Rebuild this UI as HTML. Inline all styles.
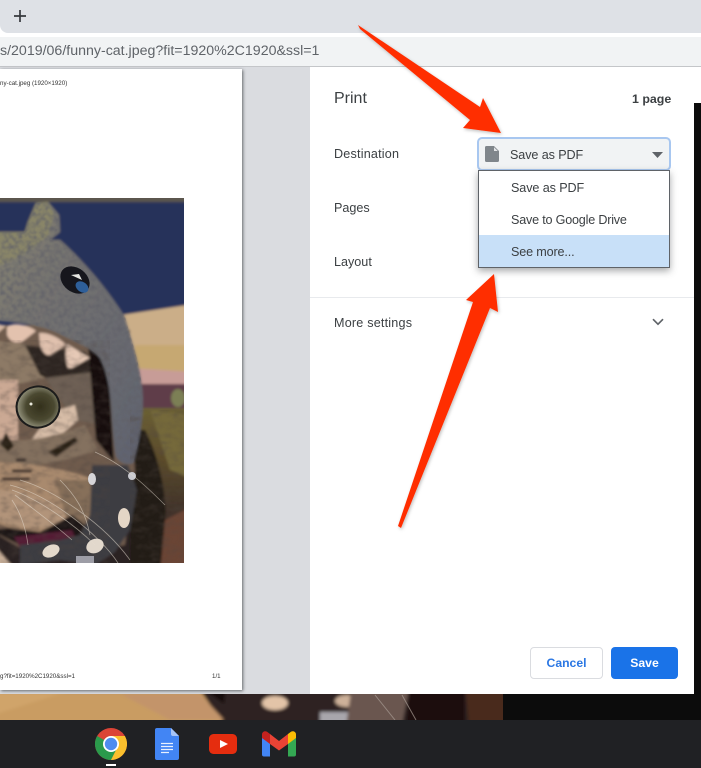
<!DOCTYPE html>
<html><head><meta charset="utf-8"><title>Print</title>
<style>
html,body{margin:0;padding:0;width:701px;height:768px;overflow:hidden;background:#0c0c0c;font-family:"Liberation Sans",sans-serif}
.a{position:absolute;white-space:nowrap}
svg{position:absolute;display:block}
.t{font-size:12.6px;color:#3c4043;line-height:16px}
</style></head><body>
<div class="a" style="left:0;top:0;width:701px;height:37px;background:#fff"></div>
<div class="a" style="left:0;top:0;width:701px;height:33px;background:#dee1e6;border-bottom-left-radius:8px"></div>
<svg style="left:13px;top:9px" width="14" height="14" viewBox="0 0 14 14"><path d="M7 1v12M1 7h12" stroke="#35383c" stroke-width="1.7" fill="none"/></svg>
<div class="a" style="left:0;top:37px;width:701px;height:29px;background:#f1f3f4"></div>
<div class="a" style="left:0;top:66px;width:701px;height:1px;background:#c4c6c9"></div>
<div class="a" style="left:0;top:43px;font-size:14.2px;line-height:16px;color:#5f6368">s/2019/06/funny-cat.jpeg?fit=1920%2C1920&amp;ssl=1</div>

<!-- right side background -->
<div class="a" style="left:694px;top:67px;width:7px;height:36px;background:#fff"></div>
<!-- photo strip at bottom -->
<svg style="left:0;top:694px" width="503" height="26" viewBox="0 0 503 26">
<defs><filter id="bl" filterUnits="userSpaceOnUse" x="-20" y="-20" width="560" height="70"><feGaussianBlur stdDeviation="1.5"/></filter></defs>
<rect width="503" height="26" fill="#3a2a26"/>
<g filter="url(#bl)">
<rect x="-10" y="-10" width="530" height="50" fill="#2e2220"/>
<path d="M-10-10H196L230 40H-10Z" fill="#c99c62"/>
<path d="M-10 -10H90L-10 22Z" fill="#d0a46a"/>
<path d="M120 0H200L224 26H170Z" fill="#c3946a"/>
<path d="M198-10H226L224 10Z" fill="#140e0c"/>
<ellipse cx="275" cy="9" rx="13" ry="7" fill="#e3c4a8"/>
<ellipse cx="347" cy="7" rx="12" ry="6" fill="#cdb199"/>
<rect x="320" y="18" width="30" height="14" fill="#a8a6ac"/>
<path d="M352-10H410L400 40H345Z" fill="#6b5650"/>
<path d="M410-10H465V40H405Z" fill="#1e110e"/>
<path d="M465-10H520V40H470Z" fill="#4a2a1e"/>
</g>
<path d="M375 1l20 25M402 1l14 25" stroke="#a89c94" stroke-width="1" opacity=".7"/>
</svg>

<!-- preview area -->
<div class="a" style="left:0;top:67px;width:310px;height:627px;background:#dadce0"></div>
<div class="a" style="left:0;top:69px;width:242px;height:621px;background:#fff;box-shadow:1px 1px 3px rgba(60,64,67,.75)"></div>
<div class="a" style="left:0;top:79px;font-size:6.2px;line-height:8px;color:#333;margin-top:1px">ny-cat.jpeg (1920×1920)</div>
<div class="a" style="left:0;top:673px;font-size:6.2px;line-height:8px;color:#333">g?fit=1920%2C1920&amp;ssl=1</div>
<div class="a" style="left:212px;top:673px;font-size:6.2px;line-height:8px;color:#333">1/1</div>

<!-- cat photo -->
<svg style="left:0;top:198px" width="184" height="365" viewBox="0 198 184 365">
<defs>
<filter id="s" filterUnits="userSpaceOnUse" x="-30" y="170" width="250" height="420"><feGaussianBlur stdDeviation="1.3"/></filter>
<filter id="w" filterUnits="userSpaceOnUse" x="-30" y="170" width="250" height="420"><feGaussianBlur stdDeviation=".35"/></filter>
<filter id="noise" filterUnits="userSpaceOnUse" x="0" y="198" width="184" height="365"><feTurbulence type="fractalNoise" baseFrequency=".22" numOctaves="2" seed="7"/><feColorMatrix values="0 0 0 0 .12 0 0 0 0 .12 0 0 0 0 .14 1.9 0 0 0 -.7"/><feGaussianBlur stdDeviation=".8"/></filter>
<filter id="noise2" filterUnits="userSpaceOnUse" x="0" y="198" width="184" height="365"><feTurbulence type="fractalNoise" baseFrequency=".1 .18" numOctaves="3" seed="3"/><feColorMatrix values="0 0 0 0 .08 0 0 0 0 .06 0 0 0 0 .05 1.6 0 0 0 -.66"/><feGaussianBlur stdDeviation=".9"/></filter>
<radialGradient id="iris" cx=".55" cy=".5" r=".6"><stop offset="0" stop-color="#33301c"/><stop offset=".55" stop-color="#4a4830"/><stop offset=".85" stop-color="#8b8a74"/><stop offset="1" stop-color="#33322e"/></radialGradient>
<linearGradient id="fur" x1="0" y1="0" x2="0" y2="1"><stop offset="0" stop-color="#6b6034"/><stop offset=".3" stop-color="#5c4c2c"/><stop offset=".6" stop-color="#42342a"/><stop offset="1" stop-color="#3d2a22"/></linearGradient>
<linearGradient id="hatg" x1="0" y1="0" x2="1" y2="1"><stop offset="0" stop-color="#8a8672"/><stop offset=".35" stop-color="#757370"/><stop offset="1" stop-color="#5e626f"/></linearGradient>
<clipPath id="hatc"><path d="M0 232L25 232L28 222L36 203L48 202L59 215L60 232L50 240L60 240C85 262 108 290 125 317C133 345 140 365 142 387C145 410 140 440 133 463C128 465 120 464 116 456C110 420 114 385 100 358C92 347 70 340 60 334C40 324 15 322 0 320Z"/></clipPath>
<clipPath id="furc"><path d="M0 340H110V563H0ZM130 410H184V563H130Z"/></clipPath>
</defs>
<rect x="0" y="198" width="184" height="365" fill="#26305a"/>
<g filter="url(#s)">
<rect x="-10" y="190" width="200" height="130" fill="#26305a"/>
<rect x="-10" y="188" width="200" height="14" fill="#5c564e"/>
<path d="M115 316L194 304V375H125Z" fill="#cbae88"/>
<path d="M135 345L194 345V375H135Z" fill="#c6a872"/>
<path d="M130 368L194 372V390L135 386Z" fill="#c79c97"/>
<path d="M135 384H194V414H140Z" fill="#5f3c48"/>
<ellipse cx="178" cy="398" rx="7" ry="9" fill="#7b7f55"/>
<rect x="125" y="408" width="69" height="165" fill="url(#fur)"/>
<path d="M145 430C165 470 172 520 160 573H125L125 430Z" fill="#221a16"/>
<path d="M150 410L194 415V480L170 470Z" fill="#75693a"/>
<path d="M165 520L194 505V573H160Z" fill="#6b4436"/>
<rect x="-10" y="330" width="140" height="245" fill="#2a2024"/>
<!-- face base -->
<path d="M-10 325H125L135 470L125 545L40 560L-10 530Z" fill="#6f5c4d"/>
<path d="M-10 340L30 345L45 378L18 384L-10 380Z" fill="#8d7a66"/>
<path d="M25 345L85 352L105 380L60 385L40 375Z" fill="#2f2620"/>
<path d="M45 378L92 372L102 425L75 420Z" fill="#6e6054"/>
<path d="M-10 380H18V440H-10Z" fill="#cba994"/>
<path d="M52 412L75 405L78 420L55 440L30 442Z" fill="#d8bea8"/>
<path d="M88 345L108 362L114 462L96 440Z" fill="#14100e"/>
<path d="M-10 438C25 445 60 435 85 425L98 450C70 460 30 470 -10 465Z" fill="#84715f"/>
<path d="M-10 462C30 462 70 470 95 480L85 530C60 540 25 535 -10 520Z" fill="#a98a6e"/>
<path d="M-10 490C25 490 55 500 72 520C50 530 15 532 -10 515Z" fill="#b2947a"/>
<path d="M55 480L95 480L88 525L70 530Z" fill="#87705a"/>
<path d="M6 432l8 14-6 6-8-8zM48 452l27-15 3 4-22 16z" fill="#2a2019"/>
<path d="M12 471h20M2 479h28M16 460h10" stroke="#2a2420" stroke-width="3"/>
<path d="M-10 530L20 545H75L85 525L72 515L40 532L10 528Z" fill="#1a1215"/>
<path d="M14 537L72 530L76 540L20 548Z" fill="#551a36"/>
<path d="M-10 540L18 573H-10Z" fill="#c9b09a"/>
<!-- hat -->
<path d="M-10 232L25 232L28 222L36 203L48 202L59 215L60 232L50 240L60 240C85 262 108 290 125 317C133 345 140 365 142 387C145 410 140 440 133 463C128 465 120 464 116 456C110 420 114 385 100 358C92 347 70 340 60 334C40 324 15 322 -10 320Z" fill="url(#hatg)"/>
<path d="M-10 232H25L28 222L36 203L48 202L54 214L48 236C35 245 20 260 -10 268Z" fill="#8a8668"/>
<path d="M92 465L128 465L137 490L130 530L115 552L95 565L60 560L20 565L20 545L60 540L80 535L90 515Z" fill="#3d3c42"/>
<!-- teeth -->
<path d="M7 327C14 321 30 326 36 331L22 342C16 344 10 342 7 335Z" fill="#e3c2ae"/>
<path d="M39 333C48 332 60 338 66 345L52 354C47 358 42 352 40 345Z" fill="#e0c1ae"/>
<path d="M67 344L90 358L72 368L68 368C65 360 65 350 67 344Z" fill="#e6c9b6"/>
<path d="M-10 322L6 326L-10 340Z" fill="#d6b8a2"/>
</g>
<!-- knit texture -->
<g clip-path="url(#hatc)"><rect x="0" y="198" width="184" height="365" filter="url(#noise)"/></g>
<g clip-path="url(#furc)"><rect x="0" y="340" width="184" height="223" filter="url(#noise2)" opacity=".5"/></g>
<g filter="url(#w)">
<!-- button eye -->
<ellipse cx="75" cy="280" rx="16" ry="12" transform="rotate(38 75 280)" fill="#14171f"/>
<ellipse cx="82" cy="287" rx="7" ry="5" transform="rotate(35 82 287)" fill="#2f5f99"/>
<path d="M71 275l8-1 3 6z" fill="#e6e6e2"/>
<!-- bobbles -->
<ellipse cx="124" cy="518" rx="6" ry="10" fill="#e4d6c6"/>
<ellipse cx="51" cy="551" rx="9" ry="6" transform="rotate(-25 51 551)" fill="#e4d9cb"/>
<ellipse cx="95" cy="546" rx="9" ry="7" transform="rotate(-25 95 546)" fill="#e2d8cc"/>
<ellipse cx="92" cy="479" rx="4" ry="6" fill="#d6d5d8"/>
<ellipse cx="132" cy="476" rx="4" ry="4" fill="#c9c9cf"/>
<rect x="76" y="556" width="18" height="8" fill="#9d9da6"/>
<!-- eye -->
<ellipse cx="38" cy="407" rx="21.500" ry="20.500" transform="rotate(-10 38 407)" fill="url(#iris)" stroke="#1e1c1a" stroke-width="2"/>
<circle cx="31" cy="404" r="1.500" fill="#e8e8dc"/>
<!-- whiskers -->
<g stroke="#e6ddd0" stroke-width=".8" fill="none" opacity=".55">
<path d="M10 485C50 495 100 535 118 563"/>
<path d="M12 490C40 500 75 525 95 545"/>
<path d="M20 480C55 490 105 525 130 560"/>
<path d="M15 495C35 510 55 525 72 540"/>
<path d="M12 500C22 515 26 530 28 545"/>
<path d="M95 452C125 465 150 490 165 505"/>
<path d="M60 480C75 495 85 510 90 535"/>
</g>
</g>
</svg>

<!-- dialog -->
<div class="a" style="left:310px;top:67px;width:384px;height:627px;background:#fff"></div>
<div class="a" style="left:334px;top:89px;font-size:16px;line-height:19px;color:#3c4043">Print</div>
<div class="a" style="left:632px;top:91px;font-size:12.4px;line-height:16px;color:#3c4043;font-weight:bold">1 page</div>
<div class="a t" style="left:334px;top:146px;letter-spacing:.2px">Destination</div>
<div class="a t" style="left:334px;top:200px">Pages</div>
<div class="a t" style="left:334px;top:254px">Layout</div>
<div class="a t" style="left:334px;top:315px;letter-spacing:.2px">More settings</div>
<div class="a" style="left:310px;top:297px;width:384px;height:1px;background:#e8eaed"></div>
<svg style="left:652px;top:318px" width="12" height="8" viewBox="0 0 12 8"><path d="M1 1.200l5 5 5-5" stroke="#5f6368" stroke-width="1.700" fill="none"/></svg>

<!-- select -->
<div class="a" style="left:477px;top:137px;width:190px;height:30px;background:#f1f3f4;border:2px solid #a8c7f0;border-radius:5px"></div>
<svg style="left:485px;top:146px" width="14" height="16" viewBox="0 0 14 16"><path d="M1.500 0H9L14 5V14.500A1.500 1.500 0 0 1 12.500 16H1.500A1.500 1.500 0 0 1 0 14.500V1.500A1.500 1.500 0 0 1 1.500 0Z" fill="#80868b"/><path d="M9 1.200V5H12.800Z" fill="#e4e6e8"/></svg>
<div class="a t" style="left:510px;top:147px;letter-spacing:-.1px">Save as PDF</div>
<svg style="left:652px;top:152px" width="11" height="6" viewBox="0 0 11 6"><path d="M0 0H11L5.500 6Z" fill="#5f6368"/></svg>
<!-- menu -->
<div class="a" style="left:478px;top:170px;width:190px;height:96px;background:#fff;border:1px solid #5f6368;box-shadow:0 3px 7px rgba(60,64,67,.45)"></div>
<div class="a" style="left:479px;top:235px;width:190px;height:32px;background:#c8e0f8"></div>
<div class="a t" style="left:511px;top:180px;letter-spacing:-.1px">Save as PDF</div>
<div class="a t" style="left:511px;top:212px;letter-spacing:-.2px">Save to Google Drive</div>
<div class="a t" style="left:511px;top:244px;letter-spacing:-.15px">See more...</div>

<!-- buttons -->
<div class="a" style="left:530px;top:647px;width:71px;height:30px;border:1px solid #dadce0;border-radius:4px;background:#fff;text-align:center;font-size:12.2px;line-height:30px;font-weight:bold;color:#2b77e3">Cancel</div>
<div class="a" style="left:611px;top:647px;width:67px;height:32px;border-radius:4px;background:#1a73e8;text-align:center;font-size:12.2px;line-height:32px;font-weight:bold;color:#fff">Save</div>

<!-- arrows -->
<svg style="left:0;top:0" width="701" height="768" viewBox="0 0 701 768">
<defs><filter id="sh" x="-10%" y="-10%" width="120%" height="120%"><feDropShadow dx="1" dy="1.500" stdDeviation="1.500" flood-color="#000" flood-opacity=".25"/></filter></defs>
<g fill="#ff2d00" filter="url(#sh)">
<path d="M358 25L360 29L470 120L463 128L501 133L483 98L480 107Z"/>
<path d="M398 526L401 528L490 308L498 312L494 274L466 300L473 302Z"/>
</g>
</svg>

<!-- shelf -->
<div class="a" style="left:0;top:720px;width:701px;height:48px;background:#202124"></div>
<!-- chrome -->
<svg style="left:95px;top:728px" width="32" height="32" viewBox="0 0 32 32">
<circle cx="16" cy="16" r="16" fill="#db4437"/>
<path d="M16 16L2.100 8A16 16 0 0 0 16 32L24 18Z" fill="#2a9a4b"/>
<path d="M16 8H29.900A16 16 0 0 1 16 32L23 18Z" fill="#fbc02d"/>
<circle cx="16" cy="16" r="8" fill="#fff"/>
<circle cx="16" cy="16" r="6.200" fill="#4f8cf0"/>
</svg>
<div class="a" style="left:106px;top:764px;width:10px;height:2px;background:#fff"></div>
<!-- docs -->
<svg style="left:155px;top:728px" width="24" height="32" viewBox="0 0 24 32">
<path d="M2 0H16L24 8V30A2 2 0 0 1 22 32H2A2 2 0 0 1 0 30V2A2 2 0 0 1 2 0Z" fill="#4285f4"/>
<path d="M16 0L24 8H18A2 2 0 0 1 16 6Z" fill="#a6c4f8"/>
<path d="M6 15.500H18M6 18.500H18M6 21.500H18M6 24.500H14" stroke="#e8f0fe" stroke-width="1.300"/>
</svg>
<!-- youtube -->
<svg style="left:209px;top:734px" width="28" height="20" viewBox="0 0 28 20">
<rect width="28" height="20" rx="4.500" fill="#e52d0f"/>
<path d="M11 6L19 10L11 14Z" fill="#fff"/>
</svg>
<!-- gmail -->
<svg style="left:262px;top:731px" width="34" height="26" viewBox="0 0 34 26">
<path d="M0 7V23.500A2 2 0 0 0 2 25.500H8V11Z" fill="#4285f4"/>
<path d="M26 11V25.500H32A2 2 0 0 0 34 23.500V7Z" fill="#34a853"/>
<path d="M0 3.500C0 .8 3 -.7 5.200 .9L8 3V13L0 7Z" fill="#c5221f"/>
<path d="M8 3L17 10L26 3V13L17 19.500L8 13Z" fill="#ea4335"/>
<path d="M26 3L28.800 .9C31 -.7 34 .8 34 3.500V7L26 13Z" fill="#fbbc04"/>
</svg>
</body></html>
